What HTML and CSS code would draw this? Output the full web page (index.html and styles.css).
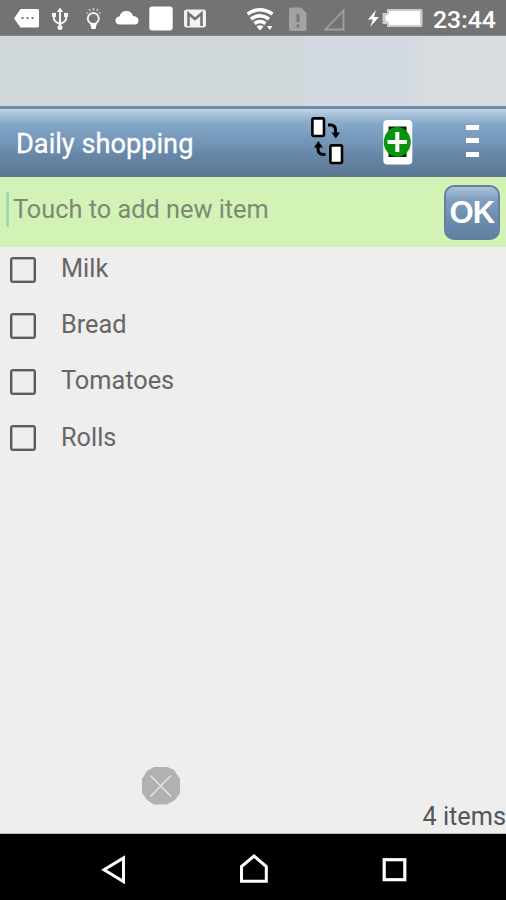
FILE: index.html
```html
<!DOCTYPE html>
<html lang="en">
<head>
<meta charset="utf-8">
<title>Daily shopping</title>
<link rel="stylesheet" href="styles.css">
</head>
<body>
<div class="screen">
  <div class="status">
    <div class="notifications">
      <svg width="25" height="36" viewBox="14 0 25 36"><path d="M20.500 9H37.500Q39 9 39 10.500V26Q39 27.500 37.500 27.500H20.500L14 18.500Z" fill="#fff"/><path d="M21.500 17h2v2h-2zM26.500 17h2v2h-2zM31.500 17h2v2h-2z" fill="#777"/></svg>
      <svg width="16" height="36" viewBox="52 0 16 36"><g fill="none" stroke="#f4f4f4" stroke-width="2"><path d="M60 10V28M54 15V19Q54 21.500 60 24Q66 21.500 66 19V15"/></g><path d="M60 7.500L63.200 12H56.800ZM52 13h4v4h-4zM64 13h4v4h-4z" fill="#f4f4f4"/><circle cx="60" cy="27.500" r="2.500" fill="#f4f4f4"/></svg>
      <svg width="17" height="36" viewBox="85 0 17 36"><circle cx="93.300" cy="18.500" r="5.500" fill="none" stroke="#eee" stroke-width="2"/><path d="M90 23H97L95.500 29H91.500Z" fill="#fff"/><path d="M93.500 8V10.500M89.200 9L90.200 11M97.800 9L96.800 11M86.500 12.500L88 13.500M100.500 12.500L99 13.500" stroke="#ccc" stroke-width="1.500"/></svg>
      <svg width="24" height="36" viewBox="115 0 24 36"><path d="M120 24.500Q115.500 24.500 115.500 20.500Q115.500 16.800 119.500 16.500Q121 11 126 11Q131.500 11 133 16Q138.500 16.500 138.500 20.500Q138.500 24.500 134.500 24.500Z" fill="#fff"/></svg>
      <svg width="24" height="36" viewBox="149 0 24 36"><rect x="149.300" y="6.500" width="23.400" height="24" rx="3" fill="#fff"/></svg>
      <svg width="22" height="36" viewBox="184 0 22 36"><rect x="185" y="10.500" width="20" height="16" rx="1.500" fill="#f2f2f2" stroke="#f2f2f2" stroke-width="2"/><path d="M188.500 26V13.500L195 19L201.500 13.500V26" fill="none" stroke="#727272" stroke-width="2.500"/></svg>
    </div>
    <div class="system">
      <svg class="wifi" width="28" height="36" viewBox="247 0 28 36"><g fill="none" stroke="#fff" stroke-width="3.600"><path d="M247.500 14Q260 5.500 272.500 14"/><path d="M251 19Q260 12.500 269 19"/><path d="M254.500 23.500Q260 19.500 265.500 23.500"/></g><path d="M256.500 26.500Q260 24 263.500 26.500L260 30.500ZM267 26h5.500l-2.700 4z" fill="#fff"/></svg>
      <svg class="sim" width="18" height="36" viewBox="289 0 18 36"><path d="M291 7.500H301L306.500 13V29Q306.500 31 304.500 31H291Q289 31 289 29V9.500Q289 7.500 291 7.500Z" fill="#a2a2a2"/><path d="M296.500 14h3v8h-3zM296.500 24.500h3v3h-3z" fill="#777"/></svg>
      <svg class="signal" width="23" height="36" viewBox="324 0 23 36"><path d="M343.500 10.500V29.500H325.500Z" fill="none" stroke="#a0a0a0" stroke-width="1.800"/></svg>
      <svg class="battery" width="56" height="36" viewBox="368 0 56 36"><path d="M376 10L368 19.500H373L370 27L379 17H374Z" fill="#fff"/><path d="M387 9H421Q422.500 9 422.500 10.500V25.500Q422.500 27 421 27H387V24H382.500V13H387Z" fill="#ccc"/><path d="M389 11H420V25H389V22.500L385.500 20V16L389 13.500Z" fill="#fff"/></svg>
      <span class="clock">23:44</span>
    </div>
  </div>
  <div class="banner"></div>
  <header class="toolbar">
    <h1>Daily shopping</h1>
    <svg class="swap" width="34" height="50" viewBox="311 116 34 50"><g fill="#fff" stroke="#000" stroke-width="2.600"><rect x="312.400" y="118.400" width="11.600" height="17.600" rx="1.500"/><rect x="330.400" y="145.400" width="11.600" height="17.600" rx="1.500"/></g><path d="M328 125H330.500Q335.500 125 335.500 130V134M325.500 154.500H323.500Q318 154.500 318 149V146" fill="none" stroke="#000" stroke-width="3"/><path d="M331.500 132.500H340L335.800 138.500ZM314 147.500H323L318.300 141Z"/></svg>
    <svg class="add-watch" width="30" height="50" viewBox="383 116 30 50"><rect x="383.300" y="120" width="29" height="44.500" rx="4" fill="#fff"/><path d="M388.500 126.500H406.500V157H388.500Z" fill="#072007"/><ellipse cx="397.300" cy="142" rx="13.500" ry="15" fill="#0a930e"/><path d="M397.300 132V152M387.500 142H407" stroke="#fff" stroke-width="4"/></svg>
    <svg class="more" width="14" height="50" viewBox="466 116 14 50"><path d="M466 125h13v5h-13zM466 138h13v5h-13zM466 152h13v5h-13z" fill="#fff"/></svg>
  </header>
  <div class="entry">
    <div class="field">Touch to add new item</div>
    <button class="ok">OK</button>
  </div>
  <ul class="list">
    <li><span class="box"></span>Milk</li>
    <li><span class="box"></span>Bread</li>
    <li><span class="box"></span>Tomatoes</li>
    <li><span class="box"></span>Rolls</li>
  </ul>
  <footer class="summary">
    <svg class="close" width="40" height="40" viewBox="141 766 40 40"><path d="M154 767H167.500L174 770L180 779V793L175 800L167 804.500H154L147 800L142 793V779L147 771Z" fill="#b1b1b1"/><path d="M150.500 775.500L171 796.500M171 775.500L150.500 796.500" stroke="#e6e6e6" stroke-width="1.400"/></svg>
    <span class="count">4 items</span>
  </footer>
  <nav class="nav">
    <svg width="26" height="66" viewBox="101 834 26 66"><path d="M123.500 858V881.500L104 869.800Z" fill="none" stroke="#fff" stroke-width="3"/></svg>
    <svg width="30" height="66" viewBox="240 834 30 66"><path d="M241.500 881.200V866.500L254 856L266.300 866.500V881.200Z" fill="none" stroke="#fff" stroke-width="3"/></svg>
    <svg width="26" height="66" viewBox="382 834 26 66"><rect x="384.200" y="859.700" width="20.600" height="20" fill="none" stroke="#fff" stroke-width="3.200"/></svg>
  </nav>
</div>
</body>
</html>
```
FILE: styles.css
```css
* { box-sizing: border-box; }
body { margin: 0; font-family: Roboto, "Liberation Sans", sans-serif; }
svg { display: block; flex: none; }
.screen { display: flex; flex-direction: column; width: 506px; height: 900px; overflow: hidden; background: #eee; }
.status { display: flex; flex: none; height: 36px; background: #737373; border-bottom: 1px solid #858686; }
.notifications { display: grid; grid-template-columns: 38px 33px 30px 34px 35px 22px; padding-left: 14px; }
.system { display: flex; margin-left: 41px; }
.sim { margin-left: 14px; }
.signal { margin-left: 17px; }
.battery { margin-left: 21px; }
.clock { margin-left: 9px; color: #fff; font-size: 24.800px; font-weight: 500; line-height: 39px; white-space: nowrap; }
.banner { flex: none; height: 70px; background: linear-gradient(90deg, #d0d8da 0 59%, #d2d9e1 61% 80%, #d6dce0 84%, #d8dde0); }
.toolbar { display: flex; flex: none; align-items: flex-start; height: 71px; padding: 7px 26px 0 16px; border-top: 3px solid #718da5; border-bottom: 1px solid #60758c; background: linear-gradient(#c2d4e5 0, #a6c0d7 9%, #84a8c8 22%, #7699bb 45%, #6686a6 70%, #5d7894 100%); }
.toolbar h1 { flex: none; width: 295px; margin: 8px 0 0; color: #fff; font-size: 27.200px; font-weight: 400; line-height: 40px; white-space: nowrap; -webkit-text-stroke: 0.3px #fff; }
.add-watch { margin-left: 38px; }
.more { margin-left: 53px; }
.entry { display: flex; flex: none; align-items: flex-start; justify-content: space-between; height: 70px; padding: 8px 6px 0; background: #d3f2b5; }
.field { height: 35px; margin-top: 7px; padding-left: 4px; border-left: 3px solid #9fd8bb; color: #7c8a74; font-size: 25.300px; line-height: 36px; white-space: nowrap; }
.ok { width: 56px; height: 55px; padding: 0; border: 2px solid #657f9d; border-radius: 10px; background: linear-gradient(#a9c1d8, #7f9fc0 25%, #6e90b3 55%, #60809f); color: #fff; font: bold 31px/52px "Liberation Sans", sans-serif; letter-spacing: -0.700px; }
.list { flex: 1; margin: 0; padding: 0; list-style: none; }
.list li { display: flex; align-items: center; height: 56.200px; padding: 0 0 13px 10px; color: #666; font-size: 25.300px; }
.box { width: 26px; height: 26px; margin: 2px 25px 0 0; border: 2px solid #5c5c5c; border-radius: 3px; box-shadow: inset 0 0 0 0.5px #777; }
.summary { display: flex; flex: none; justify-content: space-between; height: 68px; padding-left: 141px; border-bottom: 1px solid #bbb; }
.count { align-self: flex-end; color: #555; font-size: 25.300px; line-height: 32px; }
.nav { display: flex; flex: none; justify-content: space-between; height: 66px; padding: 0 98px 0 101px; background: #000; }
```
